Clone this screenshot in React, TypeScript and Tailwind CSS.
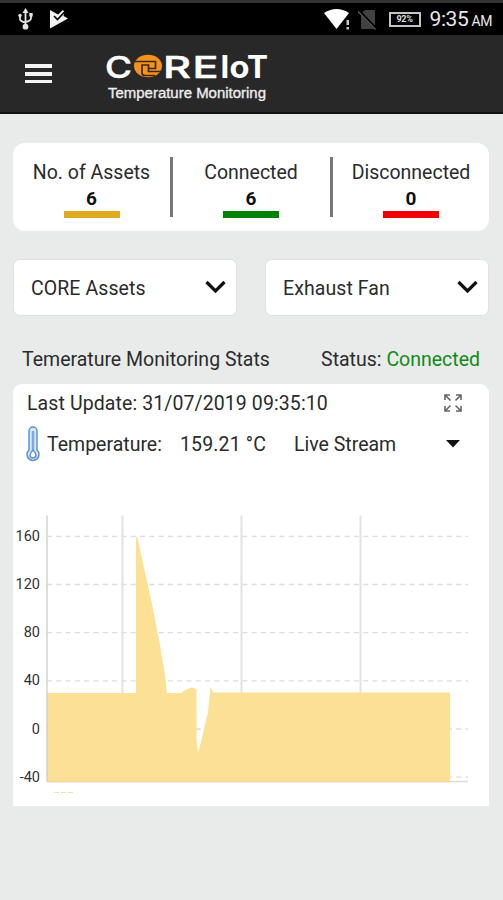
import clsx from 'clsx'

const stats = [
  { label: 'No. of Assets', value: 6, bar: 'bg-[#dfa922]' },
  { label: 'Connected', value: 6, bar: 'bg-[#058205]' },
  { label: 'Disconnected', value: 0, bar: 'bg-[#f00000]' },
]

const ticks = [160, 120, 80, 40, 0, -40]

function StatusBar() {
  return (
    <div className="flex h-[35px] items-center justify-between border-t-[3px] border-[#333] bg-black pl-[18px] pr-[11px] text-white">
      <div className="flex items-center gap-[17px]">
        <svg className="h-[22px] w-[15px]" viewBox="0 0 15 22" fill="none" stroke="#e4e4e4" strokeWidth="1.8">
          <path d="M7.5 4v14M2 7v4q0 2.500 5.500 3.500M13 6v4q0 3-5.500 4" />
          <path d="M7.500 0 10.500 5h-6Z" fill="#e4e4e4" stroke="none" />
          <circle cx="7.500" cy="18.700" r="2.900" fill="#e4e4e4" stroke="none" />
          <circle cx="2" cy="7.500" r="1.700" fill="#e4e4e4" stroke="none" />
          <path d="M11.300 5h3.400v3.400h-3.400Z" fill="#e4e4e4" stroke="none" />
        </svg>
        <svg className="h-[20px] w-[19px]" viewBox="0 0 19 20">
          <path d="M0 1 8 5.500 13 1l1.500 2-1 4L18 9.500 0 19.500Z" fill="#f2f2f2" />
          <path d="M4 7 7.500 10.500 15 2.500" fill="none" stroke="#000" strokeWidth="1.600" />
        </svg>
      </div>
      <div className="flex items-center">
        <svg className="mr-[8px] h-[22px] w-[26px]" viewBox="0 0 26 22">
          <path d="M0 5Q12.500-3 25 5L12.500 21Z" fill="#fff" />
          <path d="M21 11h6v11h-6Z" fill="#000" />
          <path d="M22.500 12h2.500v5h-2.500ZM22.500 19h2.500v2.500h-2.500Z" fill="#c8c8c8" />
        </svg>
        <svg className="mr-[12px] h-[21px] w-[19px]" viewBox="0 0 19 21">
          <path d="M7 1h9q1 0 1 1v17q0 1-1 1H4q-1 0-1-1V5Z" fill="#424242" />
          <path d="M1 2 18 20" stroke="#000" strokeWidth="3" />
          <path d="M0 2.500 17.500 20.500" stroke="#555" strokeWidth="1.500" />
        </svg>
        <div className="mr-[9px] flex h-[15px] w-[32px] items-center justify-center border-2 border-[#c4c4c4] text-[9px] font-bold leading-none tracking-[-0.3px] text-[#ddd]">
          92%
        </div>
        <div className="flex items-baseline whitespace-nowrap text-[#e8e8e8]">
          <span className="text-[21px] leading-[24px] tracking-[-0.4px]">9:35</span>
          <span className="ml-[3px] text-[14px] tracking-[-0.4px]">AM</span>
        </div>
      </div>
    </div>
  )
}

function Logo() {
  return (
    <svg className="h-[54px] w-[166px]" viewBox="0 0 166 54" fill="#fff" fontFamily="Inter, sans-serif">
      <g fontSize="30.500" fontWeight="500" stroke="#fff" strokeWidth="0.500">
        <text x="0" y="31" textLength="27" lengthAdjust="spacingAndGlyphs">C</text>
        <text x="58" y="31" textLength="28" lengthAdjust="spacingAndGlyphs">R</text>
        <text x="87.500" y="31" textLength="26" lengthAdjust="spacingAndGlyphs">E</text>
      </g>
      <g fontSize="31" fontWeight="700">
        <text x="115.500" y="31">I</text>
        <text x="124.500" y="31" textLength="20" lengthAdjust="spacingAndGlyphs">o</text>
        <text x="142" y="31" textLength="21" lengthAdjust="spacingAndGlyphs">T</text>
      </g>
      <ellipse cx="43" cy="19" rx="14" ry="11.300" fill="#f3931c" />
      <g fill="none" stroke="#3d2a14" strokeWidth="1.700">
        <path d="M30 14.500H50.500V21.500H43.500" />
        <path d="M56 24.500H43.500V18H37V26Q37 28.500 40 28.500H50" />
      </g>
      <text x="3" y="50.500" fontFamily="'Liberation Sans', Arial, sans-serif" fontSize="15.500" fill="#eee" stroke="#eee" strokeWidth="0.350" textLength="158" lengthAdjust="spacingAndGlyphs">
        Temperature Monitoring
      </text>
    </svg>
  )
}

function Header() {
  return (
    <header className="flex h-[79px] items-center border-b-2 border-[#111] bg-[#282828] pl-[25px]">
      <div className="mr-[53px] flex w-[27px] flex-col gap-[4px]">
        <span className="h-[4px] bg-[#f4f4f4]" />
        <span className="h-[4px] bg-[#f4f4f4]" />
        <span className="h-[3px] bg-[#f4f4f4]" />
      </div>
      <Logo />
    </header>
  )
}

function SelectBox({ label }: { label: string }) {
  return (
    <button
      type="button"
      className="flex h-[57px] w-[224px] items-center justify-between rounded-[7px] border border-[#dfe1e0] bg-white pl-[17px] pr-[10px] pt-[2px]"
    >
      <span className="text-[19.5px] tracking-[0.08px]">{label}</span>
      <svg className="-mt-[3px] h-[14px] w-[21px]" viewBox="0 0 21 14" fill="none" stroke="#111" strokeWidth="3.200">
        <path d="M1.500 2 10.500 11 19.500 2" />
      </svg>
    </button>
  )
}

function Chart() {
  return (
    <svg className="h-[310px] w-[476px]" viewBox="13 496 476 310">
      <g stroke="#dcdcdc" strokeWidth="1.300" strokeDasharray="5 4.300">
        {ticks.map((tick) => (
          <path key={tick} d={`M47 ${729 - tick * 1.204}H468`} />
        ))}
      </g>
      <path d="M122.500 515.500V781M241.500 515.500V781M360.500 515.500V781" stroke="#e2e2e2" strokeWidth="2" />
      <path d="M47 781.500H468" stroke="#dcdcdc" strokeWidth="1.500" />
      <path
        d="M47 693H136V536.500L137.500 538 152 604 160 645 165 675 167 693H181Q190 687 193 687.500L196.500 690V740L198 752 200 746 208 712 210.500 687 213 692.500H450V781.500H47Z"
        fill="#fbe096"
      />
      <path d="M197.500 729.500h3" stroke="#dcdcdc" />
      <path d="M47 781.500H450" stroke="#f3d698" strokeWidth="1.300" />
      <path d="M47 515.500V781.500" stroke="#ccc" strokeWidth="1.300" />
      <path d="M54 792.500H74" stroke="#eee3a8" strokeDasharray="5 2" />
      <g fill="#333" fontSize="14.500" textAnchor="end">
        {ticks.map((tick) => (
          <text key={tick} x="40" y={733.500 - tick * 1.204}>
            {tick}
          </text>
        ))}
      </g>
    </svg>
  )
}

export default function App() {
  return (
    <div className="min-h-[900px] w-[503px] bg-[#e9ebea] font-[Roboto,sans-serif] text-[#2b2b2b]">
      <StatusBar />
      <Header />
      <main className="px-[13px] pt-[29px]">
        <section className="flex h-[88px] w-[476px] rounded-[12px] bg-white pt-[14px]">
          {stats.map((stat, i) => (
            <div
              key={stat.label}
              className={clsx(
                'flex h-[60px] shrink-0 flex-col items-center',
                i === 0 ? 'w-[157px]' : 'w-[160px] border-l-[3px] border-[#777] pr-[1px]',
              )}
            >
              <span className="whitespace-nowrap pt-px text-[19.5px] leading-[29px]">{stat.label}</span>
              <span className="text-[19px] font-bold leading-[23px] text-[#111]">{stat.value}</span>
              <span className={clsx('mt-[1px] h-[7px] w-[56px] shrink-0', stat.bar)} />
            </div>
          ))}
        </section>

        <div className="mt-[28px] flex gap-[28px]">
          <SelectBox label="CORE Assets" />
          <SelectBox label="Exhaust Fan" />
        </div>

        <div className="mt-[29px] flex h-[30px] w-[476px] items-center justify-between whitespace-nowrap pl-[9px] pr-[9px] text-[19.5px]">
          <span>Temerature Monitoring Stats</span>
          <span>
            Status: <span className="text-[#108a18]">Connected</span>
          </span>
        </div>

        <section className="mt-[9px] w-[476px] rounded-t-[9px] bg-white">
          <div className="flex h-[37px] items-center justify-between pl-[14px] pr-[26px]">
            <span className="pt-[2px] text-[19.5px] tracking-[0.1px]">Last Update: 31/07/2019 09:35:10</span>
            <svg className="h-[20px] w-[20px]" viewBox="0 0 20 20" fill="none" stroke="#666" strokeWidth="1.600">
              <path d="M2 7V2h5M2 2l5.500 5.500M13 2h5v5M18 2l-5.500 5.500M2 13v5h5M2 18l5.500-5.500M18 13v5h-5M18 18l-5.500-5.500" />
            </svg>
          </div>
          <div className="flex h-[46px] items-center whitespace-nowrap pl-[13px] pt-[2px] text-[19.5px]">
            <svg className="-mt-[2px] mr-[7px] h-[36px] w-[14px]" viewBox="0 0 14 36" fill="#d8e8f6" stroke="#5c94c8" strokeWidth="1.500">
              <path d="M3 24V5a4 4 0 0 1 8 0v19a6 6 0 1 1-8 0Z" />
              <path d="M7 5v19" strokeWidth="2.500" stroke="#7aabd9" />
              <path d="M7 24q-3 3-3 5a3 3 0 0 0 6 0q0-2-3-5Z" fill="#fff" />
            </svg>
            <span className="w-[133px]">Temperature:</span>
            <span className="w-[114px] tracking-[0.15px]">159.21 °C</span>
            <span className="w-[152px]">Live Stream</span>
            <svg className="-mt-[2px] h-[8px] w-[14px]" viewBox="0 0 14 8">
              <path d="M0 0H14L7 7.500Z" fill="#111" />
            </svg>
          </div>
          <div className="h-[29px]" />
          <Chart />
        </section>
      </main>
    </div>
  )
}
